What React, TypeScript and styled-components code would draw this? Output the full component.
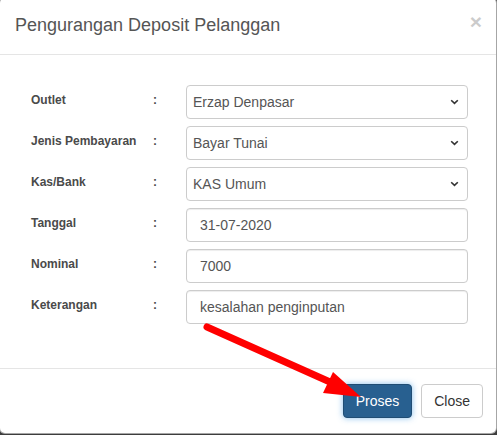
import { Fragment } from "react";
import styled, { createGlobalStyle } from "styled-components";

const GlobalStyle = createGlobalStyle`
  html, body {
    margin: 0;
    padding: 0;
    background: #3d3d3d;
    overflow: hidden;
  }
  * {
    box-sizing: border-box;
  }
`;

const Page = styled.div`
  position: relative;
  width: 497px;
  height: 435px;
  overflow: hidden;
  font-family: "Liberation Sans", Arial, sans-serif;
`;

const Modal = styled.div`
  margin: -3px 0 0 -1px;
  width: 498px;
  height: 437px;
  background: #fff;
  border: 1px solid rgba(0, 0, 0, 0.35);
  border-radius: 6px;
  display: flex;
  flex-direction: column;
`;

const Header = styled.div`
  display: flex;
  justify-content: space-between;
  align-items: flex-start;
  padding: 15px 14px 15px 15px;
  border-bottom: 1px solid #e5e5e5;
`;

const Title = styled.h4`
  margin: 0;
  font-size: 18px;
  font-weight: normal;
  line-height: 25.7px;
  color: #555;
`;

const CloseX = styled.button`
  border: 0;
  background: none;
  padding: 0;
  margin-top: -2px;
  font-family: inherit;
  font-size: 21px;
  font-weight: bold;
  line-height: 1;
  color: #000;
  opacity: 0.2;
  cursor: pointer;
`;

const Body = styled.div`
  flex: 1;
  padding: 30px 28px 0 31px;
`;

const Form = styled.div`
  display: grid;
  grid-template-columns: 122px 33px 1fr;
  row-gap: 7px;
  align-items: center;
`;

const Label = styled.div`
  font-size: 12px;
  font-weight: bold;
  color: #4a4a4a;
  margin-top: -3px;
`;

const Colon = styled(Label)``;

const SelectBox = styled.div`
  height: 34px;
  display: flex;
  align-items: center;
  justify-content: space-between;
  padding: 0 8px 0 6px;
  border: 1px solid #ccc;
  border-radius: 4px;
  font-size: 14px;
  color: #555;
  background: #fff;
`;

const Input = styled.input`
  height: 34px;
  width: 100%;
  padding: 0 12px 0 13px;
  border: 1px solid #ccc;
  border-radius: 4px;
  font-family: inherit;
  font-size: 14px;
  color: #555;
  box-shadow: inset 0 1px 1px rgba(0, 0, 0, 0.075);
  outline: none;
`;

const Footer = styled.div`
  display: flex;
  justify-content: flex-end;
  gap: 9px;
  padding: 15px 13px 15px 15px;
  border-top: 1px solid #e5e5e5;
`;

const Button = styled.button<{ $primary?: boolean }>`
  height: 34px;
  padding: 0 12px;
  font-family: inherit;
  font-size: 14px;
  border-radius: 4px;
  border: 1px solid ${(p) => (p.$primary ? "#204d74" : "#ccc")};
  background: ${(p) => (p.$primary ? "#286090" : "#fff")};
  color: ${(p) => (p.$primary ? "#fff" : "#333")};
  box-shadow: ${(p) =>
    p.$primary ? "0 0 6px rgba(102, 175, 233, 0.8)" : "none"};
`;

const Arrow = styled.svg`
  position: absolute;
  left: 0;
  top: 0;
  pointer-events: none;
`;

function Chevron() {
  return (
    <svg width="9" height="6" viewBox="0 0 9 6">
      <polyline
        points="1.2,1.2 4.5,4.4 7.8,1.2"
        fill="none"
        stroke="#333"
        strokeWidth="1.6"
      />
    </svg>
  );
}

const selects = [
  ["Outlet", "Erzap Denpasar"],
  ["Jenis Pembayaran", "Bayar Tunai"],
  ["Kas/Bank", "KAS Umum"],
];

const inputs = [
  ["Tanggal", "31-07-2020"],
  ["Nominal", "7000"],
  ["Keterangan", "kesalahan penginputan"],
];

export default function App() {
  return (
    <Page>
      <GlobalStyle />
      <Modal>
        <Header>
          <Title>Pengurangan Deposit Pelanggan</Title>
          <CloseX>×</CloseX>
        </Header>
        <Body>
          <Form>
            {selects.map(([label, value]) => (
              <Fragment key={label}>
                <Label>{label}</Label>
                <Colon>:</Colon>
                <SelectBox>
                  {value}
                  <Chevron />
                </SelectBox>
              </Fragment>
            ))}
            {inputs.map(([label, value]) => (
              <Fragment key={label}>
                <Label>{label}</Label>
                <Colon>:</Colon>
                <Input defaultValue={value} />
              </Fragment>
            ))}
          </Form>
        </Body>
        <Footer>
          <Button $primary>Proses</Button>
          <Button>Close</Button>
        </Footer>
      </Modal>
      <Arrow width="497" height="435">
        <line
          x1="207"
          y1="327"
          x2="330"
          y2="382"
          stroke="#f00"
          strokeWidth="7"
          strokeLinecap="round"
        />
        <polygon points="361,397 333,372 323,393" fill="#f00" />
      </Arrow>
    </Page>
  );
}
